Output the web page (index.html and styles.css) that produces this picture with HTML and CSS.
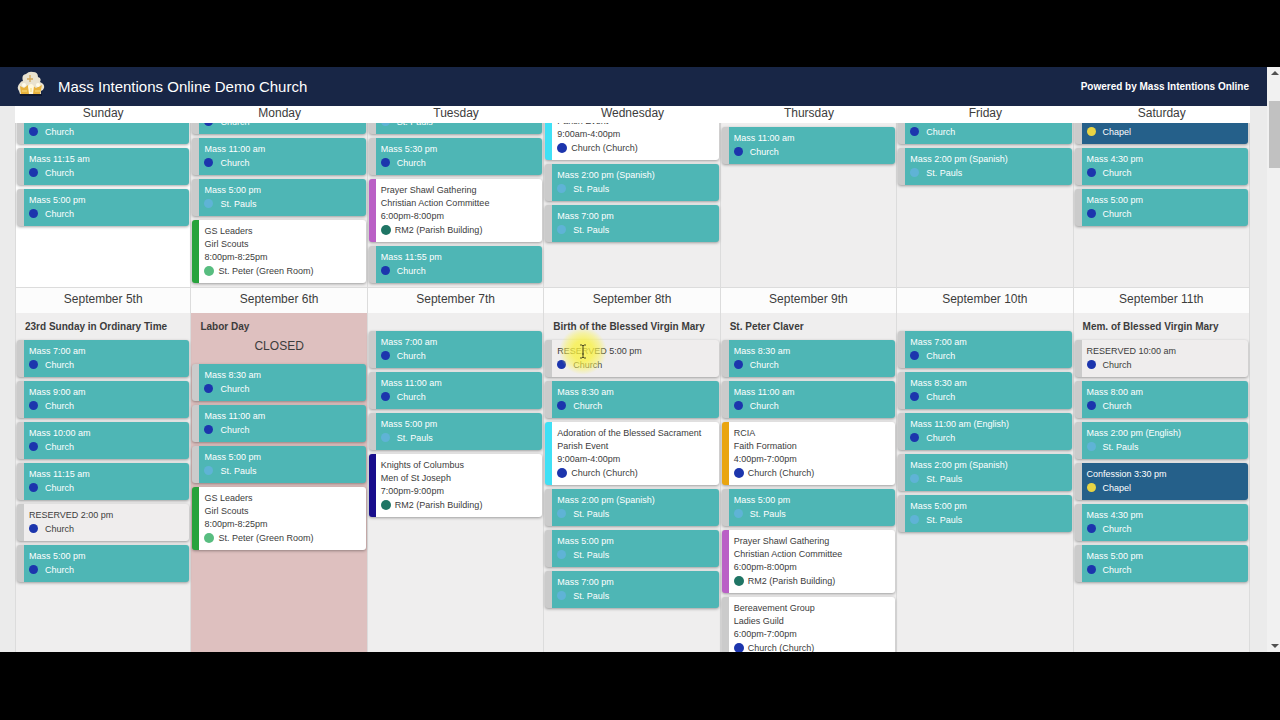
FILE: index.html
```
<!DOCTYPE html>
<html lang="en">

<head>
    <meta charset="UTF-8">
    <title>Mass Intentions Online Demo Church</title>
    <link rel="stylesheet" href="styles.css">
</head>

<body>
    <div class="screen">
        <div class="page">
            <header class="topbar">
                <svg class="logo" viewBox="0 0 28 26" width="28" height="26" aria-hidden="true">
                    <path d="M2 20 Q-1 16 3 12 Q4 10 6 10 Q4 4 9 3 Q12 0 16 1 Q21 1 21 6 Q25 7 23 11 Q28 13 27 17 Q26 20 24 20 L24 23 H3 Z" fill="#e9e2cf" />
                    <path d="M3 23 H25 V25 H3 Z" fill="#10182e" />
                    <path d="M3 15 L7 17 L11 14 L13 23 H4 Z M15 14 L19 17 L25 14 L23 23 H15 Z" fill="#e8b23c" />
                    <path d="M13 4 V11 M10 8 H16" stroke="#d5a95a" stroke-width="1.3" fill="none" />
                    <path d="M11 15 Q14 11 17 15 L16 23 H12 Z" fill="#fff8dd" />
                    <circle cx="7" cy="14" r="2" fill="#fffbea" />
                    <circle cx="21" cy="14" r="2" fill="#fffbea" />
                    <path d="M5 20 H10 M18 20 H23 M14 17 V21" stroke="#f8df83" stroke-width="1.2" />
                </svg>
                <h1 class="title">Mass Intentions Online Demo Church</h1>
                <a class="powered" href="#">Powered by Mass Intentions Online</a>
            </header>

            <main class="calendar">
                <div class="weekdays">
                    <span>Sunday</span>
                    <span>Monday</span>
                    <span>Tuesday</span>
                    <span>Wednesday</span>
                    <span>Thursday</span>
                    <span>Friday</span>
                    <span>Saturday</span>
                </div>

                <!-- last week, scrolled part way under the weekday bar -->
                <div class="week scrolled">
                    <div class="day past">
                        <div class="events offset-feast">
                            <div class="card mass"><p>Mass 10:00 am</p><p class="place"><i class="dot church"></i>Church</p></div>
                            <div class="card mass"><p>Mass 11:15 am</p><p class="place"><i class="dot church"></i>Church</p></div>
                            <div class="card mass"><p>Mass 5:00 pm</p><p class="place"><i class="dot church"></i>Church</p></div>
                        </div>
                    </div>
                    <div class="day">
                        <div class="events">
                            <div class="card mass"><p>Mass 8:30 am</p><p class="place"><i class="dot church"></i>Church</p></div>
                            <div class="card mass"><p>Mass 11:00 am</p><p class="place"><i class="dot church"></i>Church</p></div>
                            <div class="card mass"><p>Mass 5:00 pm</p><p class="place"><i class="dot pauls"></i>St. Pauls</p></div>
                            <div class="card event scouts"><p>GS Leaders</p><p>Girl Scouts</p><p>8:00pm-8:25pm</p><p class="place"><i class="dot peter"></i>St. Peter (Green Room)</p></div>
                        </div>
                    </div>
                    <div class="day">
                        <div class="events">
                            <div class="card mass"><p>Mass 5:00 pm</p><p class="place"><i class="dot pauls"></i>St. Pauls</p></div>
                            <div class="card mass"><p>Mass 5:30 pm</p><p class="place"><i class="dot church"></i>Church</p></div>
                            <div class="card event action"><p>Prayer Shawl Gathering</p><p>Christian Action Committee</p><p>6:00pm-8:00pm</p><p class="place"><i class="dot rm2"></i>RM2 (Parish Building)</p></div>
                            <div class="card mass"><p>Mass 11:55 pm</p><p class="place"><i class="dot church"></i>Church</p></div>
                        </div>
                    </div>
                    <div class="day">
                        <div class="events">
                            <div class="card event parish"><p>Adoration of the Blessed Sacrament</p><p>Parish Event</p><p>9:00am-4:00pm</p><p class="place"><i class="dot church"></i>Church (Church)</p></div>
                            <div class="card mass"><p>Mass 2:00 pm (Spanish)</p><p class="place"><i class="dot pauls"></i>St. Pauls</p></div>
                            <div class="card mass"><p>Mass 7:00 pm</p><p class="place"><i class="dot pauls"></i>St. Pauls</p></div>
                        </div>
                    </div>
                    <div class="day">
                        <div class="events offset-last">
                            <div class="card mass"><p>Mass 11:00 am</p><p class="place"><i class="dot church"></i>Church</p></div>
                        </div>
                    </div>
                    <div class="day">
                        <div class="events offset-feast">
                            <div class="card mass"><p>Mass 11:00 am (English)</p><p class="place"><i class="dot church"></i>Church</p></div>
                            <div class="card mass"><p>Mass 2:00 pm (Spanish)</p><p class="place"><i class="dot pauls"></i>St. Pauls</p></div>
                        </div>
                    </div>
                    <div class="day">
                        <div class="events offset-feast">
                            <div class="card confession"><p>Confession 3:30 pm</p><p class="place"><i class="dot chapel"></i>Chapel</p></div>
                            <div class="card mass"><p>Mass 4:30 pm</p><p class="place"><i class="dot church"></i>Church</p></div>
                            <div class="card mass"><p>Mass 5:00 pm</p><p class="place"><i class="dot church"></i>Church</p></div>
                        </div>
                    </div>
                </div>

                <div class="week current">
                    <div class="day">
                        <h2 class="date">September 5th</h2>
                        <h3 class="feast">23rd Sunday in Ordinary Time</h3>
                        <div class="events">
                            <div class="card mass"><p>Mass 7:00 am</p><p class="place"><i class="dot church"></i>Church</p></div>
                            <div class="card mass"><p>Mass 9:00 am</p><p class="place"><i class="dot church"></i>Church</p></div>
                            <div class="card mass"><p>Mass 10:00 am</p><p class="place"><i class="dot church"></i>Church</p></div>
                            <div class="card mass"><p>Mass 11:15 am</p><p class="place"><i class="dot church"></i>Church</p></div>
                            <div class="card reserved"><p>RESERVED 2:00 pm</p><p class="place"><i class="dot church"></i>Church</p></div>
                            <div class="card mass"><p>Mass 5:00 pm</p><p class="place"><i class="dot church"></i>Church</p></div>
                        </div>
                    </div>
                    <div class="day holiday">
                        <h2 class="date">September 6th</h2>
                        <h3 class="feast">Labor Day</h3>
                        <p class="closed">CLOSED</p>
                        <div class="events">
                            <div class="card mass"><p>Mass 8:30 am</p><p class="place"><i class="dot church"></i>Church</p></div>
                            <div class="card mass"><p>Mass 11:00 am</p><p class="place"><i class="dot church"></i>Church</p></div>
                            <div class="card mass"><p>Mass 5:00 pm</p><p class="place"><i class="dot pauls"></i>St. Pauls</p></div>
                            <div class="card event scouts"><p>GS Leaders</p><p>Girl Scouts</p><p>8:00pm-8:25pm</p><p class="place"><i class="dot peter"></i>St. Peter (Green Room)</p></div>
                        </div>
                    </div>
                    <div class="day">
                        <h2 class="date">September 7th</h2>
                        <div class="events no-feast">
                            <div class="card mass"><p>Mass 7:00 am</p><p class="place"><i class="dot church"></i>Church</p></div>
                            <div class="card mass"><p>Mass 11:00 am</p><p class="place"><i class="dot church"></i>Church</p></div>
                            <div class="card mass"><p>Mass 5:00 pm</p><p class="place"><i class="dot pauls"></i>St. Pauls</p></div>
                            <div class="card event knights"><p>Knights of Columbus</p><p>Men of St Joseph</p><p>7:00pm-9:00pm</p><p class="place"><i class="dot rm2"></i>RM2 (Parish Building)</p></div>
                        </div>
                    </div>
                    <div class="day">
                        <h2 class="date">September 8th</h2>
                        <h3 class="feast">Birth of the Blessed Virgin Mary</h3>
                        <div class="events">
                            <div class="card reserved">
                                <p>RESERVED 5:00 pm</p><p class="place"><i class="dot church"></i>Church</p>
                                <span class="pointer">
                                    <svg viewBox="0 0 8 15" width="8" height="15" aria-hidden="true">
                                        <path d="M1 1 H3 L4 2 L5 1 H7 M4 2 V13 M1 14 H3 L4 13 L5 14 H7 M3 10 H5" stroke="#4d4b20" fill="none" />
                                    </svg>
                                </span>
                            </div>
                            <div class="card mass"><p>Mass 8:30 am</p><p class="place"><i class="dot church"></i>Church</p></div>
                            <div class="card event parish"><p>Adoration of the Blessed Sacrament</p><p>Parish Event</p><p>9:00am-4:00pm</p><p class="place"><i class="dot church"></i>Church (Church)</p></div>
                            <div class="card mass"><p>Mass 2:00 pm (Spanish)</p><p class="place"><i class="dot pauls"></i>St. Pauls</p></div>
                            <div class="card mass"><p>Mass 5:00 pm</p><p class="place"><i class="dot pauls"></i>St. Pauls</p></div>
                            <div class="card mass"><p>Mass 7:00 pm</p><p class="place"><i class="dot pauls"></i>St. Pauls</p></div>
                        </div>
                    </div>
                    <div class="day">
                        <h2 class="date">September 9th</h2>
                        <h3 class="feast">St. Peter Claver</h3>
                        <div class="events">
                            <div class="card mass"><p>Mass 8:30 am</p><p class="place"><i class="dot church"></i>Church</p></div>
                            <div class="card mass"><p>Mass 11:00 am</p><p class="place"><i class="dot church"></i>Church</p></div>
                            <div class="card event formation"><p>RCIA</p><p>Faith Formation</p><p>4:00pm-7:00pm</p><p class="place"><i class="dot church"></i>Church (Church)</p></div>
                            <div class="card mass"><p>Mass 5:00 pm</p><p class="place"><i class="dot pauls"></i>St. Pauls</p></div>
                            <div class="card event action"><p>Prayer Shawl Gathering</p><p>Christian Action Committee</p><p>6:00pm-8:00pm</p><p class="place"><i class="dot rm2"></i>RM2 (Parish Building)</p></div>
                            <div class="card event"><p>Bereavement Group</p><p>Ladies Guild</p><p>6:00pm-7:00pm</p><p class="place"><i class="dot church"></i>Church (Church)</p></div>
                        </div>
                    </div>
                    <div class="day">
                        <h2 class="date">September 10th</h2>
                        <div class="events no-feast">
                            <div class="card mass"><p>Mass 7:00 am</p><p class="place"><i class="dot church"></i>Church</p></div>
                            <div class="card mass"><p>Mass 8:30 am</p><p class="place"><i class="dot church"></i>Church</p></div>
                            <div class="card mass"><p>Mass 11:00 am (English)</p><p class="place"><i class="dot church"></i>Church</p></div>
                            <div class="card mass"><p>Mass 2:00 pm (Spanish)</p><p class="place"><i class="dot pauls"></i>St. Pauls</p></div>
                            <div class="card mass"><p>Mass 5:00 pm</p><p class="place"><i class="dot pauls"></i>St. Pauls</p></div>
                        </div>
                    </div>
                    <div class="day">
                        <h2 class="date">September 11th</h2>
                        <h3 class="feast">Mem. of Blessed Virgin Mary</h3>
                        <div class="events">
                            <div class="card reserved"><p>RESERVED 10:00 am</p><p class="place"><i class="dot church"></i>Church</p></div>
                            <div class="card mass"><p>Mass 8:00 am</p><p class="place"><i class="dot church"></i>Church</p></div>
                            <div class="card mass"><p>Mass 2:00 pm (English)</p><p class="place"><i class="dot pauls"></i>St. Pauls</p></div>
                            <div class="card confession"><p>Confession 3:30 pm</p><p class="place"><i class="dot chapel"></i>Chapel</p></div>
                            <div class="card mass"><p>Mass 4:30 pm</p><p class="place"><i class="dot church"></i>Church</p></div>
                            <div class="card mass"><p>Mass 5:00 pm</p><p class="place"><i class="dot church"></i>Church</p></div>
                        </div>
                    </div>
                </div>
            </main>
        </div>

        <div class="scrollbar">
            <svg viewBox="0 0 8 4" width="8" height="4" aria-hidden="true"><path d="M0 4 L4 0 L8 4 Z" fill="#505050" /></svg>
            <span class="thumb"></span>
            <svg viewBox="0 0 8 4" width="8" height="4" aria-hidden="true"><path d="M0 0 L4 4 L8 0 Z" fill="#505050" /></svg>
        </div>
    </div>
</body>

</html>
```
FILE: styles.css
```
* {
    box-sizing: border-box;
}

body {
    margin: 0;
    height: 100vh;
    padding: 67px 0 68px;
    background-color: #000;
    color: #3c3c3c;
    font-family: "Liberation Sans", Arial, Helvetica, sans-serif;
    font-size: 9px;
    line-height: 13px;
}

h1, h2, h3, p {
    margin: 0;
}

.screen {
    display: flex;
    height: 100%;
    overflow: hidden;
    background-color: #ebebeb;
}

.page {
    flex: 1;
    min-width: 0;
    display: flex;
    flex-direction: column;
}

/* header */
.topbar {
    display: flex;
    align-items: center;
    flex: none;
    height: 39px;
    padding: 0 18px 0 17px;
    background-color: #182646;
    color: #fff;
}

.logo {
    margin-bottom: 6px;
}

.title {
    margin-left: 13px;
    font-size: 15px;
    font-weight: normal;
    line-height: 20px;
}

.powered {
    margin-left: auto;
    color: #fff;
    font-size: 10px;
    font-weight: bold;
    text-decoration: none;
}

/* calendar */
.calendar {
    flex: 1;
    min-height: 0;
    display: flex;
    flex-direction: column;
    margin: 0 17px 0 15px;
}

.weekdays {
    display: grid;
    grid-template-columns: repeat(7, 1fr);
    flex: none;
    background-color: #fff;
    font-size: 12px;
    line-height: 14px;
    padding-bottom: 3px;
    text-align: center;
}

.week {
    display: grid;
    grid-template-columns: repeat(7, minmax(0, 1fr));
    overflow: hidden;
}

.scrolled {
    flex: none;
    border-bottom: 1px solid #dcdcdc;
}

.scrolled .events {
    margin-top: -26px;
}

.scrolled .offset-feast {
    margin-top: -16px;
}

.scrolled .offset-last {
    margin-top: 4px;
}

.current {
    flex: 1;
    min-height: 0;
}

.day {
    min-width: 0;
    border-right: 1px solid #dcdcdc;
    background-color: #efeeee;
}

.day:first-child {
    border-left: 1px solid #dcdcdc;
}

.past {
    background-color: #fff;
}

.holiday {
    background-color: #dec0bf;
}

.date {
    height: 25px;
    background-color: #fcfcfc;
    font-size: 12px;
    font-weight: normal;
    line-height: 23px;
    text-align: center;
}

.feast {
    padding-left: 9px;
    font-size: 10px;
    line-height: 27px;
    white-space: nowrap;
}

.closed {
    height: 24px;
    font-size: 12px;
    text-align: center;
}

.no-feast {
    padding-top: 18px;
}

/* event cards */
.card {
    position: relative;
    margin: 0 1px 4px;
    padding: 5px 0 4px 5px;
    border-left: 7px solid #cbcbcb;
    border-radius: 3px;
    box-shadow: 0 1px 3px rgba(0, 0, 0, 0.35);
    white-space: nowrap;
}

.mass {
    background-color: #4eb6b5;
    color: #fff;
}

.confession {
    background-color: #25608a;
    color: #fff;
}

.reserved {
    background-color: #efeded;
}

.event {
    background-color: #fff;
}

.scouts {
    border-left-color: #27a33c;
}

.action {
    border-left-color: #ba60c6;
}

.parish {
    border-left-color: #3fe0f5;
}

.formation {
    border-left-color: #e9a510;
}

.knights {
    border-left-color: #180d8c;
}

.place {
    display: flex;
    align-items: center;
    line-height: 15px;
}

.dot {
    width: 9px;
    height: 9px;
    margin: 0 7px 2px 0;
    border-radius: 50%;
}

.event .dot {
    width: 10px;
    height: 10px;
    margin-right: 4px;
}

.church {
    background-color: #1c35ad;
}

.pauls {
    background-color: #5fb3d6;
}

.peter {
    background-color: #58bd80;
}

.rm2 {
    background-color: #1f7565;
}

.chapel {
    background-color: #e8d444;
}

/* mouse pointer with its highlight */
.pointer {
    position: absolute;
    top: -13px;
    left: 7px;
    z-index: 1;
    display: flex;
    align-items: center;
    justify-content: center;
    width: 48px;
    height: 48px;
    border-radius: 50%;
    background: radial-gradient(circle, rgba(250, 242, 60, 0.75) 30%, rgba(250, 244, 90, 0.5) 52%, rgba(250, 244, 110, 0) 70%);
}

/* scrollbar */
.scrollbar {
    display: flex;
    flex-direction: column;
    align-items: center;
    flex: none;
    width: 13px;
    padding: 4px 0 4px 2px;
    background-color: #f1f1f1;
}

.thumb {
    width: 100%;
    height: 67px;
    margin: 26px 0 auto;
    background-color: #c1c1c1;
}
```
